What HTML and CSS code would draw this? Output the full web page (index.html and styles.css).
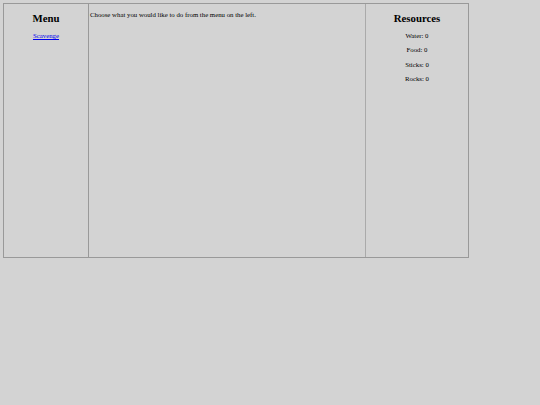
FILE: index.html
```html
<!DOCTYPE html>
<html>
<head>
<meta charset="utf-8">
<link rel="stylesheet" href="styles.css">
</head>
<body>
<div class="frame">
  <div class="col menu">
    <h2 class="title">Menu</h2>
    <a class="link" href="#">Scavenge</a>
  </div>
  <div class="col main">
    <p class="msg">Choose what you would like to do from the menu on the left.</p>
  </div>
  <div class="col res">
    <h2 class="title">Resources</h2>
    <p class="item">Water: 0</p>
    <p class="item">Food: 0</p>
    <p class="item">Sticks: 0</p>
    <p class="item">Rocks: 0</p>
  </div>
</div>
</body>
</html>
```

FILE: styles.css
```css
html, body {
  margin: 0;
  padding: 0;
  background: #d3d3d3;
  font-family: "Liberation Serif", "Times New Roman", serif;
  color: #000;
}
.frame {
  display: flex;
  margin: 3px;
  width: 464px;
  height: 253px;
  border: 1px solid #999;
}
.col {
  box-sizing: border-box;
}
.menu {
  width: 85px;
  border-right: 1px solid #999;
  text-align: center;
  display: flex;
  flex-direction: column;
  align-items: center;
}
.main {
  width: 277px;
  border-right: 1px solid #aaa;
  padding: 0 1px;
}
.res {
  flex: 1;
  text-align: center;
}
.title {
  font-size: 10.8px;
  font-weight: bold;
  margin: 8px 0 0;
  line-height: 12px;
}
.link {
  font-size: 6.8px;
  color: #00e;
  margin-top: 8px;
}
.msg {
  font-size: 6.8px;
  margin: 7px 0 0;
}
.item {
  font-size: 6.8px;
  margin: 6px 0 0;
  line-height: 8.4px;
}
.res .title + .item {
  margin-top: 8px;
}
```
